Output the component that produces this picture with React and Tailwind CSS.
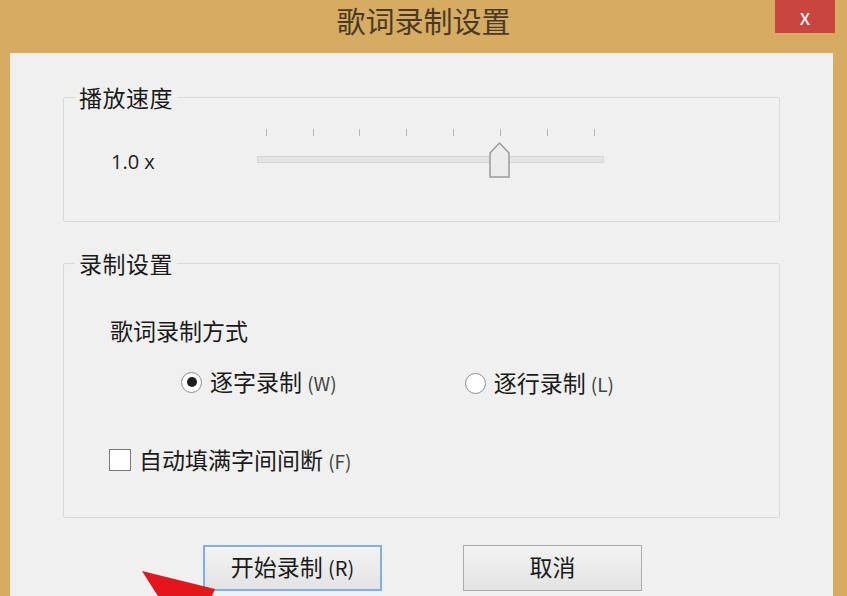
import React from 'react';

const CJK = { fontFamily: '"Noto Sans CJK SC", "Noto Sans", sans-serif' };

const TICKS = [0, 1, 2, 3, 4, 5, 6, 7];

function Group({ title, className, children }) {
  return (
    <fieldset className={`border border-[#d9d9d9] rounded-[2px] w-[717px] px-0 ${className}`}>
      <legend className="ml-[11px] px-[4px] text-[23px] leading-[28px] text-[#1a1a1a] tracking-[0.5px]">{title}</legend>
      {children}
    </fieldset>
  );
}

function Radio({ checked, label, hint }) {
  return (
    <label className="flex items-center gap-[8px]">
      <span className="w-[21px] h-[21px] rounded-full border-[1.5px] border-[#8c8c8c] bg-white flex items-center justify-center">
        {checked && <span className="w-[10px] h-[10px] rounded-full bg-[#1e1e1e]" />}
      </span>
      <span className="text-[23px] leading-[28px] text-[#1a1a1a]">
        {label} <span className="text-[19px] text-[#444]">{hint}</span>
      </span>
    </label>
  );
}

export default function App() {
  return (
    <div className="w-[847px] h-[596px] overflow-hidden bg-[#d6ab62] relative" style={CJK}>
      {/* title bar */}
      <div className="h-[53px] flex items-center justify-center">
        <span className="text-[29px] text-[#4a3a25] -mt-[11px]">歌词录制设置</span>
      </div>
      <button className="absolute top-0 right-[12px] w-[60px] h-[33px] bg-[#c9453f] text-white text-[21px] flex items-center justify-center">
        x
      </button>

      {/* client area */}
      <div className="ml-[10px] w-[823px] h-[543px] bg-[#f0f0f0] pl-[53px] pt-[30px]">
        <Group title="播放速度" className="h-[139px]">
          <div className="flex items-start mt-[16px]">
            <span className="ml-[47px] mt-[21px] text-[20px] leading-[28px] text-[#222]" style={{ fontFamily: '"Open Sans", "Noto Sans", sans-serif' }}>
              1.0 x
            </span>
            <div className="relative ml-[102px] w-[347px] h-[53px]">
              <div className="absolute top-[2px] left-0 right-0 flex justify-between px-[9px]">
                {TICKS.map((t) => (
                  <span key={t} className="w-[1px] h-[7px] bg-[#b5b5b5]" />
                ))}
              </div>
              <div className="absolute top-[29px] left-0 right-0 h-[7px] bg-[#e4e4e4] border border-[#d4d4d4]" />
              <svg className="absolute left-[231px] top-[14px]" width="23" height="38" viewBox="0 0 23 38">
                <path d="M2 12 L11.5 2 L21 12 L21 36 L2 36 Z" fill="#ececec" stroke="#9a9a9a" strokeWidth="1.5" />
              </svg>
            </div>
          </div>
        </Group>

        <Group title="录制设置" className="h-[269px] mt-[27px]">
          <div className="pl-[46px] pt-[39px]">
            <div className="text-[23px] leading-[28px] text-[#1a1a1a]">歌词录制方式</div>
            <div className="flex mt-[22px] ml-[71px]">
              <Radio checked label="逐字录制" hint="(W)" />
              <div className="ml-[128px] mt-[2px]">
                <Radio label="逐行录制" hint="(L)" />
              </div>
            </div>
            <label className="flex items-center gap-[8px] mt-[47px] -ml-[1px]">
              <span className="w-[22px] h-[22px] border-[1.5px] border-[#7a7a7a] bg-white" />
              <span className="text-[23px] leading-[28px] text-[#1a1a1a]">
                自动填满字间间断 <span className="text-[19px] text-[#444]">(F)</span>
              </span>
            </label>
          </div>
        </Group>

        <div className="flex gap-[81px] mt-[27px] ml-[140px]">
          <button className="w-[179px] h-[46px] pb-[4px] border-2 border-[#7cb2e6] bg-gradient-to-b from-[#f3f3f3] to-[#e3e3e3] text-[23px] text-[#1a1a1a]">
            开始录制 <span className="text-[20px]">(R)</span>
          </button>
          <button className="w-[179px] h-[46px] pb-[4px] border border-[#acacac] bg-gradient-to-b from-[#f3f3f3] to-[#e3e3e3] text-[23px] text-[#1a1a1a]">
            取消
          </button>
        </div>
      </div>

      {/* annotation arrow */}
      <svg className="absolute left-[130px] top-[562px]" width="95" height="34" viewBox="0 0 95 34">
        <polygon points="12,9 85,27 82,34 28,34 24,28" fill="#e3161b" />
      </svg>
    </div>
  );
}
